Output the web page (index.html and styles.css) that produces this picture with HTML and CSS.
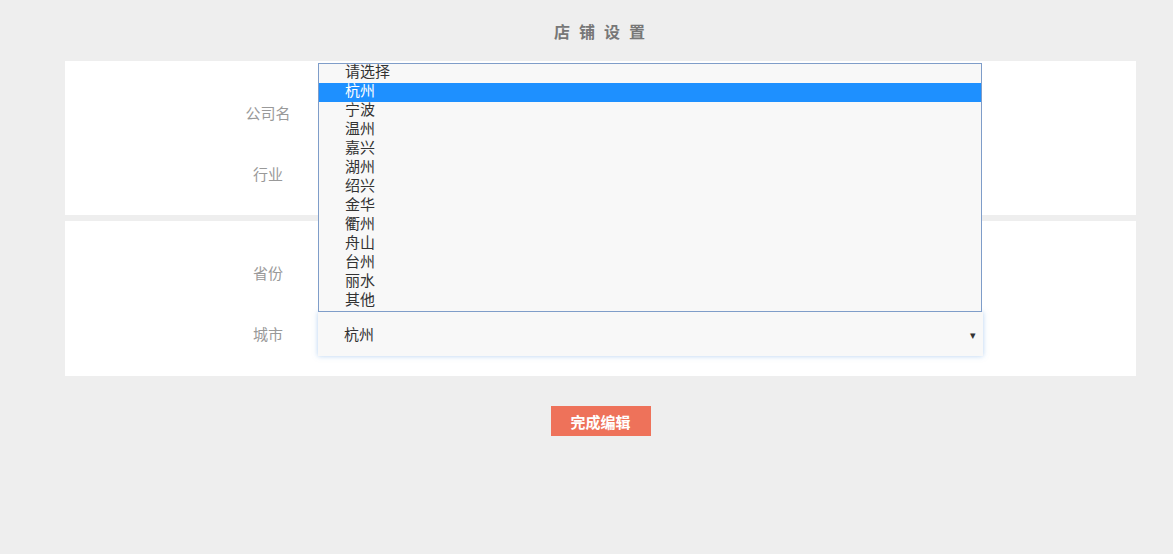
FILE: index.html
```html
<!DOCTYPE html>
<html lang="zh-CN">
<head>
    <meta charset="UTF-8">
    <meta name="viewport" content="width=device-width, initial-scale=1.0">
    <title>店铺设置</title>
    <link rel="stylesheet" href="styles.css">
</head>
<body>
    <div class="page">
        <h1 class="titulo">店铺设置</h1>

        <!-- Bloque 1: empresa -->
        <div class="panel">
            <div class="fila">
                <label class="etiqueta">公司名</label>
                <div class="campo"></div>
            </div>
            <div class="fila">
                <label class="etiqueta">行业</label>
                <div class="campo"></div>
            </div>
        </div>

        <!-- Bloque 2: ubicación -->
        <div class="panel">
            <div class="fila">
                <label class="etiqueta">省份</label>
                <div class="campo"></div>
            </div>
            <div class="fila">
                <label class="etiqueta">城市</label>
                <div class="campo select-wrap">
                    <div class="select">
                        <span>杭州</span>
                        <span class="flecha">&#9662;</span>
                    </div>
                    <!-- Lista desplegada -->
                    <ul class="lista">
                        <li>请选择</li>
                        <li class="activo">杭州</li>
                        <li>宁波</li>
                        <li>温州</li>
                        <li>嘉兴</li>
                        <li>湖州</li>
                        <li>绍兴</li>
                        <li>金华</li>
                        <li>衢州</li>
                        <li>舟山</li>
                        <li>台州</li>
                        <li>丽水</li>
                        <li>其他</li>
                    </ul>
                </div>
            </div>
        </div>

        <div class="acciones">
            <button class="boton">完成编辑</button>
        </div>
    </div>
</body>
</html>
```

FILE: styles.css
```css
body {
    margin: 0;
    padding: 0;
    background: #eeeeee;
    font-family: "Noto Sans CJK SC", "Noto Sans", sans-serif;
    font-size: 15px;
    color: #333;
}

.page {
    width: 1071px;
    margin-left: 65px;
}

/* Título */
.titulo {
    margin: 0;
    height: 61px;
    line-height: 63px;
    text-align: center;
    font-size: 16px;
    font-weight: bold;
    color: #777;
    letter-spacing: 9px;
    text-indent: 7px;
}

/* Paneles blancos */
.panel {
    background: #fff;
    padding: 30px 0 20px 153px;
    display: flex;
    flex-direction: column;
    gap: 17px;
}

.panel:first-of-type {
    padding-bottom: 19px;
}

.panel + .panel {
    margin-top: 6px;
}

.fila {
    display: flex;
    align-items: center;
    height: 44px;
}

.etiqueta {
    width: 100px;
    text-align: center;
    color: #999;
    line-height: 16px;
}

.campo {
    width: 665px;
    height: 44px;
}

.select-wrap {
    position: relative;
}

.select {
    box-sizing: border-box;
    height: 44px;
    background: #f8f8f8;
    box-shadow: 0 0 5px rgba(110, 165, 230, 0.5);
    display: flex;
    align-items: center;
    justify-content: space-between;
    padding: 0 7px 0 26px;
    line-height: 16px;
}

.flecha {
    font-size: 11px;
    color: #333;
}

/* Lista desplegada del select */
.lista {
    position: absolute;
    left: 0;
    bottom: 44px;
    box-sizing: border-box;
    width: 664px;
    margin: 0;
    padding: 0;
    list-style: none;
    background: #f8f8f8;
    border: 1px solid #7f9dc9;
}

.lista li {
    height: 19px;
    line-height: 14px;
    padding-left: 26px;
}

.lista li.activo {
    background: #1e90ff;
    color: #fff;
}

/* Botón */
.acciones {
    display: flex;
    justify-content: center;
    padding-top: 30px;
}

.boton {
    width: 100px;
    height: 30px;
    border: none;
    background: #ee725a;
    color: #fff;
    font-family: "Noto Sans CJK SC", sans-serif;
    font-size: 15px;
    font-weight: bold;
    cursor: pointer;
}
```
